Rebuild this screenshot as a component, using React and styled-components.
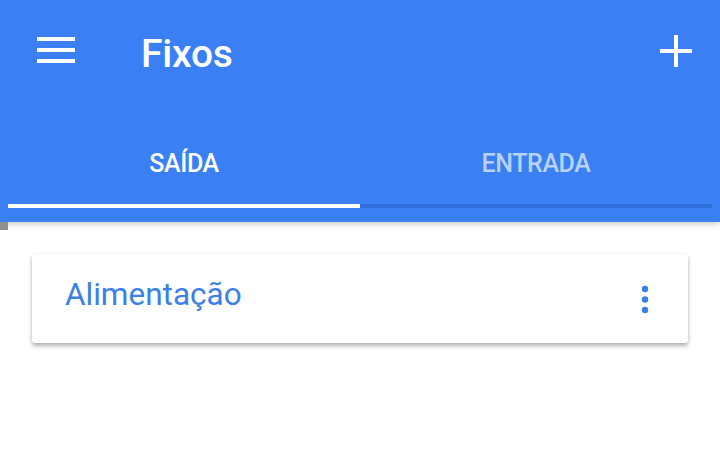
import styled, { createGlobalStyle } from "styled-components";

const GlobalStyle = createGlobalStyle`
  html, body {
    margin: 0;
    padding: 0;
    background: #ffffff;
    font-family: Roboto, "Noto Sans", sans-serif;
  }
`;

const Page = styled.div`
  width: 720px;
  height: 475px;
  background: #ffffff;
  overflow: hidden;
`;

const Header = styled.header`
  position: relative;
  background-color: #3a80f4;
  padding-bottom: 14px;
  box-shadow: 0 2px 6px rgba(0, 0, 0, 0.22);

  &::after {
    content: "";
    position: absolute;
    left: 0;
    bottom: -8px;
    width: 8px;
    height: 8px;
    background: #8f8f8f;
  }
`;

const Toolbar = styled.div`
  height: 102px;
  display: flex;
  align-items: center;
  padding: 0 28px 0 37px;
`;

const IconButton = styled.button`
  border: none;
  background: none;
  padding: 0;
  display: flex;
  align-items: center;
  justify-content: center;
  cursor: pointer;
`;

const Title = styled.h1`
  flex: 1;
  margin: 5px 0 0 66px;
  font-size: 39px;
  font-weight: 500;
  color: #ffffff;
  letter-spacing: -0.2px;
`;

const Tabs = styled.div`
  display: flex;
  margin: 0 8px;
`;

const Tab = styled.div`
  flex: 1;
  height: 106px;
  display: flex;
  align-items: center;
  justify-content: center;
  padding-top: 20px;
  box-sizing: border-box;
  font-size: 25px;
  font-weight: 500;
  letter-spacing: -0.4px;
  color: ${(p) => (p.$active ? "#ffffff" : "#b9d2fa")};
  border-bottom: 4px solid ${(p) => (p.$active ? "#ffffff" : "#306fdc")};
`;

const Content = styled.main`
  padding: 32px 32px;
`;

const Card = styled.div`
  height: 89px;
  display: flex;
  align-items: center;
  justify-content: space-between;
  padding: 0 38px 0 33px;
  background: #ffffff;
  border-radius: 3px;
  box-shadow: 0 3px 4px rgba(0, 0, 0, 0.3), 0 0 2px rgba(0, 0, 0, 0.08);
`;

const CardTitle = styled.span`
  font-size: 31.5px;
  font-weight: 400;
  color: #3b7fe7;
  margin-top: -9px;
`;

const MenuDots = () => (
  <svg width="10" height="30" viewBox="0 0 10 30">
    <circle cx="5" cy="5" r="3.2" fill="#3a7fe8" />
    <circle cx="5" cy="15.5" r="3.2" fill="#3a7fe8" />
    <circle cx="5" cy="26" r="3.2" fill="#3a7fe8" />
  </svg>
);

const Hamburger = () => (
  <svg width="38" height="28" viewBox="0 0 38 28">
    <rect x="0" y="0" width="38" height="4" fill="#fff" />
    <rect x="0" y="11" width="38" height="4" fill="#fff" />
    <rect x="0" y="22" width="38" height="4" fill="#fff" />
  </svg>
);

const Plus = () => (
  <svg width="32" height="32" viewBox="0 0 32 32">
    <rect x="14" y="0" width="4" height="32" fill="#fff" />
    <rect x="0" y="14" width="32" height="4" fill="#fff" />
  </svg>
);

export default function App() {
  return (
    <Page>
      <GlobalStyle />
      <Header>
        <Toolbar>
          <IconButton aria-label="menu">
            <Hamburger />
          </IconButton>
          <Title>Fixos</Title>
          <IconButton aria-label="adicionar">
            <Plus />
          </IconButton>
        </Toolbar>
        <Tabs>
          <Tab $active>SAÍDA</Tab>
          <Tab>ENTRADA</Tab>
        </Tabs>
      </Header>
      <Content>
        <Card>
          <CardTitle>Alimentação</CardTitle>
          <IconButton aria-label="opções">
            <MenuDots />
          </IconButton>
        </Card>
      </Content>
    </Page>
  );
}
